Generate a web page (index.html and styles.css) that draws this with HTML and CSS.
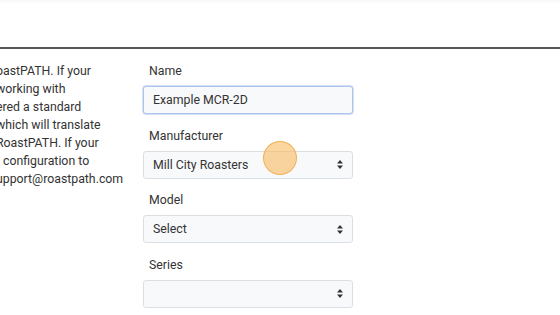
FILE: index.html
```html
<!DOCTYPE html>
<html lang="en">
<head>
    <meta charset="UTF-8">
    <meta name="viewport" content="width=device-width, initial-scale=1.0">
    <title>Add Roaster</title>
    <link rel="stylesheet" href="styles.css">
</head>
<body>

    <div class="topbar"></div>

    <div class="content">
        <!-- Help text (cut off by the left edge) -->
        <div class="help">
            <div class="help-text">
                <div class="line">oastPATH. If your</div>
                <div class="line">working with</div>
                <div class="line">ered a standard</div>
                <div class="line">which will translate</div>
                <div class="line">RoastPATH. If your</div>
                <div class="line indent">configuration to</div>
                <div class="line">upport@roastpath.com</div>
            </div>
        </div>

        <!-- Roaster form -->
        <form class="roaster-form">
            <div class="form-group">
                <label for="name">Name</label>
                <input type="text" id="name" class="field focused" value="Example MCR-2D">
            </div>

            <div class="form-group">
                <label for="manufacturer">Manufacturer</label>
                <div class="select-wrap">
                    <select id="manufacturer" class="field">
                        <option>Mill City Roasters</option>
                    </select>
                    <span class="click-dot"></span>
                </div>
            </div>

            <div class="form-group">
                <label for="model">Model</label>
                <select id="model" class="field">
                    <option>Select</option>
                </select>
            </div>

            <div class="form-group">
                <label for="series">Series</label>
                <select id="series" class="field">
                    <option></option>
                </select>
            </div>
        </form>
    </div>

</body>
</html>
```

FILE: styles.css
```css
body {
    margin: 0;
    font-family: Roboto, "Liberation Sans", sans-serif;
    font-size: 12.3px;
    color: #333;
    background-color: white;
    overflow: hidden;
}

.topbar {
    height: 47px;
    border-bottom: 2px solid #555;
    background: linear-gradient(#f6f6f6, white 4px);
}

.content {
    display: flex;
    padding-top: 12px;
}

.help {
    width: 143px;
    flex-shrink: 0;
    padding-top: 1px;
    line-height: 18px;
    white-space: nowrap;
    overflow: hidden;
}

.help-text {
    margin-left: -4px;
}

.help .indent {
    padding-left: 7px;
}

.roaster-form {
    width: 210px;
}

.form-group {
    margin-bottom: 11.5px;
}

.form-group label {
    display: block;
    line-height: 19px;
    padding-top: 1px;
    padding-left: 6px;
    margin-bottom: 5px;
}

.field {
    display: block;
    width: 100%;
    height: 28px;
    box-sizing: border-box;
    padding: 0 9px;
    font-family: inherit;
    font-size: 12.3px;
    color: #333;
    background-color: #f8f9fa;
    border: 1px solid #dcdfe2;
    border-radius: 3px;
}

.field.focused {
    border-color: #a9c3ec;
    box-shadow: 0 0 0 1px #d6e3f7;
    outline: none;
}

select.field {
    appearance: none;
    background-image: url("data:image/svg+xml,%3Csvg xmlns='http://www.w3.org/2000/svg' width='6' height='9'%3E%3Cpath d='M3 0L6 3.5H0z M3 9L0 5.5H6z' fill='%23333'/%3E%3C/svg%3E");
    background-repeat: no-repeat;
    background-position: right 9px center;
}

.select-wrap {
    position: relative;
}

.click-dot {
    position: absolute;
    left: 120px;
    top: -10px;
    width: 34px;
    height: 34px;
    box-sizing: border-box;
    border-radius: 50%;
    background-color: rgba(250, 180, 80, 0.55);
    border: 1px solid rgba(235, 160, 60, 0.7);
}
```
